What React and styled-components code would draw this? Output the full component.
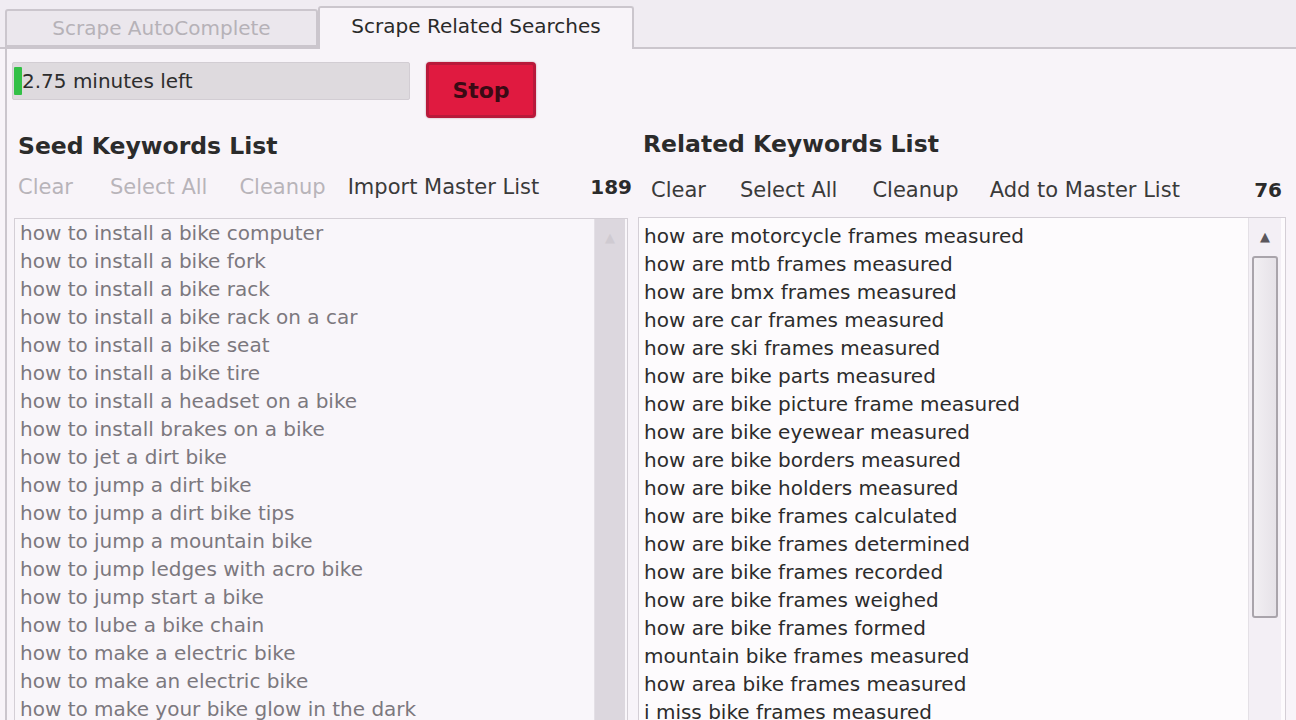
import React from "react";
import styled, { createGlobalStyle } from "styled-components";

const Global = createGlobalStyle`
  html, body { margin: 0; padding: 0; }
  body {
    background: #f8f4f9;
    font-family: "DejaVu Sans", Tahoma, sans-serif;
    overflow: hidden;
  }
`;

const Window = styled.div`
  width: 1296px;
  height: 720px;
  overflow: hidden;
  display: flex;
  flex-direction: column;
`;

const TabBar = styled.div`
  height: 49px;
  flex: none;
  display: flex;
  align-items: flex-end;
  padding-left: 5px;
  background: #f0ecf2;
  border-bottom: 2px solid #cbc6cd;
  box-sizing: border-box;
`;

const Tab = styled.div`
  box-sizing: border-box;
  width: ${(p) => p.$w}px;
  height: ${(p) => (p.$active ? 43 : 38)}px;
  margin-bottom: ${(p) => (p.$active ? -2 : 0)}px;
  display: flex;
  align-items: center;
  justify-content: center;
  font-size: 20px;
  color: ${(p) => (p.$active ? "#2a2a2a" : "#b6b2b8")};
  background: ${(p) => (p.$active ? "#f8f4f9" : "#ebe7ed")};
  border: 2px solid #cbc6cd;
  border-bottom: ${(p) => (p.$active ? "none" : "2px solid #cbc6cd")};
  border-radius: 3px 3px 0 0;
  padding-bottom: ${(p) => (p.$active ? 6 : 0)}px;
`;

const Pane = styled.div`
  flex: 1;
  min-height: 0;
  margin-left: 5px;
  border-left: 2px solid #cbc6cd;
  padding: 13px 10px 0 5px;
  display: flex;
  flex-direction: column;
`;

const TopRow = styled.div`
  display: flex;
  align-items: flex-start;
  gap: 16px;
`;

const Progress = styled.div`
  position: relative;
  width: 398px;
  height: 38px;
  box-sizing: border-box;
  background: #dedade;
  border: 1px solid #d2cdd3;
  border-radius: 2px;
  display: flex;
  align-items: center;
  padding-left: 9px;
  font-size: 20px;
  color: #2d2d2d;
  overflow: hidden;
`;

const ProgressFill = styled.div`
  position: absolute;
  left: 1px;
  top: 4px;
  bottom: 4px;
  background: #33c047;
  border-radius: 1px;
`;

const ProgressText = styled.span`
  position: relative;
`;

const StopButton = styled.button`
  width: 110px;
  height: 56px;
  box-sizing: border-box;
  background: #e01a40;
  border: 3px solid #b8193a;
  border-radius: 4px;
  box-shadow: 0 0 2px rgba(120, 0, 30, 0.4);
  font-family: "DejaVu Sans", Tahoma, sans-serif;
  font-weight: bold;
  font-size: 22px;
  color: #3a0a14;
  padding: 0;
`;

const Columns = styled.div`
  flex: 1;
  min-height: 0;
  display: grid;
  grid-template-columns: 614px 648px;
  column-gap: 10px;
  margin-top: 12px;
  margin-left: 2px;
`;

const Column = styled.div`
  display: flex;
  flex-direction: column;
  min-height: 0;
`;

const Title = styled.h2`
  margin: 0 0 0 ${(p) => p.$indent}px;
  font-size: 23.5px;
  font-weight: bold;
  color: #2b2b2b;
  line-height: 30px;
  transform: translateY(${(p) => p.$dy}px);
`;

const Toolbar = styled.div`
  display: flex;
  align-items: center;
  height: 34px;
  margin-top: ${(p) => p.$mt}px;
  padding-left: ${(p) => p.$indent}px;
`;

const Action = styled.span`
  font-size: 21px;
  color: ${(p) => (p.$disabled ? "#b8b4ba" : "#3a3a3a")};
  margin-right: ${(p) => p.$gap}px;
  white-space: nowrap;
`;

const Count = styled.span`
  margin-left: auto;
  font-size: 20px;
  font-weight: bold;
  color: #2b2b2b;
  margin-right: ${(p) => p.$mr}px;
`;

const ListBox = styled.div`
  flex: 1;
  min-height: 0;
  margin-top: ${(p) => p.$mt}px;
  display: flex;
  background: ${(p) => (p.$disabled ? "#f9f6fa" : "#fdfbfd")};
  border: 1px solid #d4cfd6;
  border-bottom: none;
  overflow: hidden;
`;

const Items = styled.ul`
  flex: 1;
  list-style: none;
  margin: 0;
  padding: ${(p) => p.$pt}px 0 0 5px;
`;

const Item = styled.li`
  height: 28px;
  line-height: 28px;
  font-size: 20px;
  white-space: nowrap;
  color: ${(p) => (p.$disabled ? "#7c787e" : "#2c2c2c")};
`;

const Scrollbar = styled.div`
  width: ${(p) => p.$w}px;
  flex: none;
  background: ${(p) => (p.$disabled ? "#dcd7de" : "#f3eff5")};
  border-left: 1px solid #e4e0e6;
  margin-right: ${(p) => p.$mr}px;
  display: flex;
  flex-direction: column;
  align-items: center;
`;

const Arrow = styled.div`
  height: 36px;
  display: flex;
  align-items: center;
  justify-content: center;
  color: ${(p) => (p.$disabled ? "#cfcad1" : "#5a565c")};
  font-size: 13px;
`;

const Thumb = styled.div`
  width: 26px;
  height: 362px;
  margin-top: 2px;
  box-sizing: border-box;
  background: linear-gradient(90deg, #f2eff3 0%, #e6e2e8 100%);
  border: 2px solid #a9a4ab;
  border-radius: 3px;
`;

const seeds = [
  "how to install a bike computer",
  "how to install a bike fork",
  "how to install a bike rack",
  "how to install a bike rack on a car",
  "how to install a bike seat",
  "how to install a bike tire",
  "how to install a headset on a bike",
  "how to install brakes on a bike",
  "how to jet a dirt bike",
  "how to jump a dirt bike",
  "how to jump a dirt bike tips",
  "how to jump a mountain bike",
  "how to jump ledges with acro bike",
  "how to jump start a bike",
  "how to lube a bike chain",
  "how to make a electric bike",
  "how to make an electric bike",
  "how to make your bike glow in the dark",
];

const related = [
  "how are motorcycle frames measured",
  "how are mtb frames measured",
  "how are bmx frames measured",
  "how are car frames measured",
  "how are ski frames measured",
  "how are bike parts measured",
  "how are bike picture frame measured",
  "how are bike eyewear measured",
  "how are bike borders measured",
  "how are bike holders measured",
  "how are bike frames calculated",
  "how are bike frames determined",
  "how are bike frames recorded",
  "how are bike frames weighed",
  "how are bike frames formed",
  "mountain bike frames measured",
  "how area bike frames measured",
  "i miss bike frames measured",
];

export default function App() {
  return (
    <Window>
      <Global />
      <TabBar>
        <Tab $w={313}>Scrape AutoComplete</Tab>
        <Tab $w={316} $active>
          Scrape Related Searches
        </Tab>
      </TabBar>
      <Pane>
        <TopRow>
          <Progress>
            <ProgressFill style={{ width: "8px" }} />
            <ProgressText>2.75 minutes left</ProgressText>
          </Progress>
          <StopButton>Stop</StopButton>
        </TopRow>
        <Columns>
          <Column>
            <Title $indent={4} $dy={1}>Seed Keywords List</Title>
            <Toolbar $mt={10} $indent={4}>
              <Action $disabled $gap={37}>Clear</Action>
              <Action $disabled $gap={32}>Select All</Action>
              <Action $disabled $gap={22}>Cleanup</Action>
              <Action>Import Master List</Action>
              <Count $mr={-4}>189</Count>
            </Toolbar>
            <ListBox $mt={14} $disabled>
              <Items $pt={0}>
                {seeds.map((s) => (
                  <Item key={s} $disabled>
                    {s}
                  </Item>
                ))}
              </Items>
              <Scrollbar $w={30} $mr={2} $disabled>
                <Arrow $disabled>▲</Arrow>
              </Scrollbar>
            </ListBox>
          </Column>
          <Column>
            <Title $indent={5} $dy={-1}>Related Keywords List</Title>
            <Toolbar $mt={13} $indent={13}>
              <Action $gap={34}>Clear</Action>
              <Action $gap={35}>Select All</Action>
              <Action $gap={31}>Cleanup</Action>
              <Action>Add to Master List</Action>
              <Count $mr={4}>76</Count>
            </Toolbar>
            <ListBox $mt={10}>
              <Items $pt={4}>
                {related.map((s) => (
                  <Item key={s}>{s}</Item>
                ))}
              </Items>
              <Scrollbar $w={32} $mr={4}>
                <Arrow>▲</Arrow>
                <Thumb />
              </Scrollbar>
            </ListBox>
          </Column>
        </Columns>
      </Pane>
    </Window>
  );
}
